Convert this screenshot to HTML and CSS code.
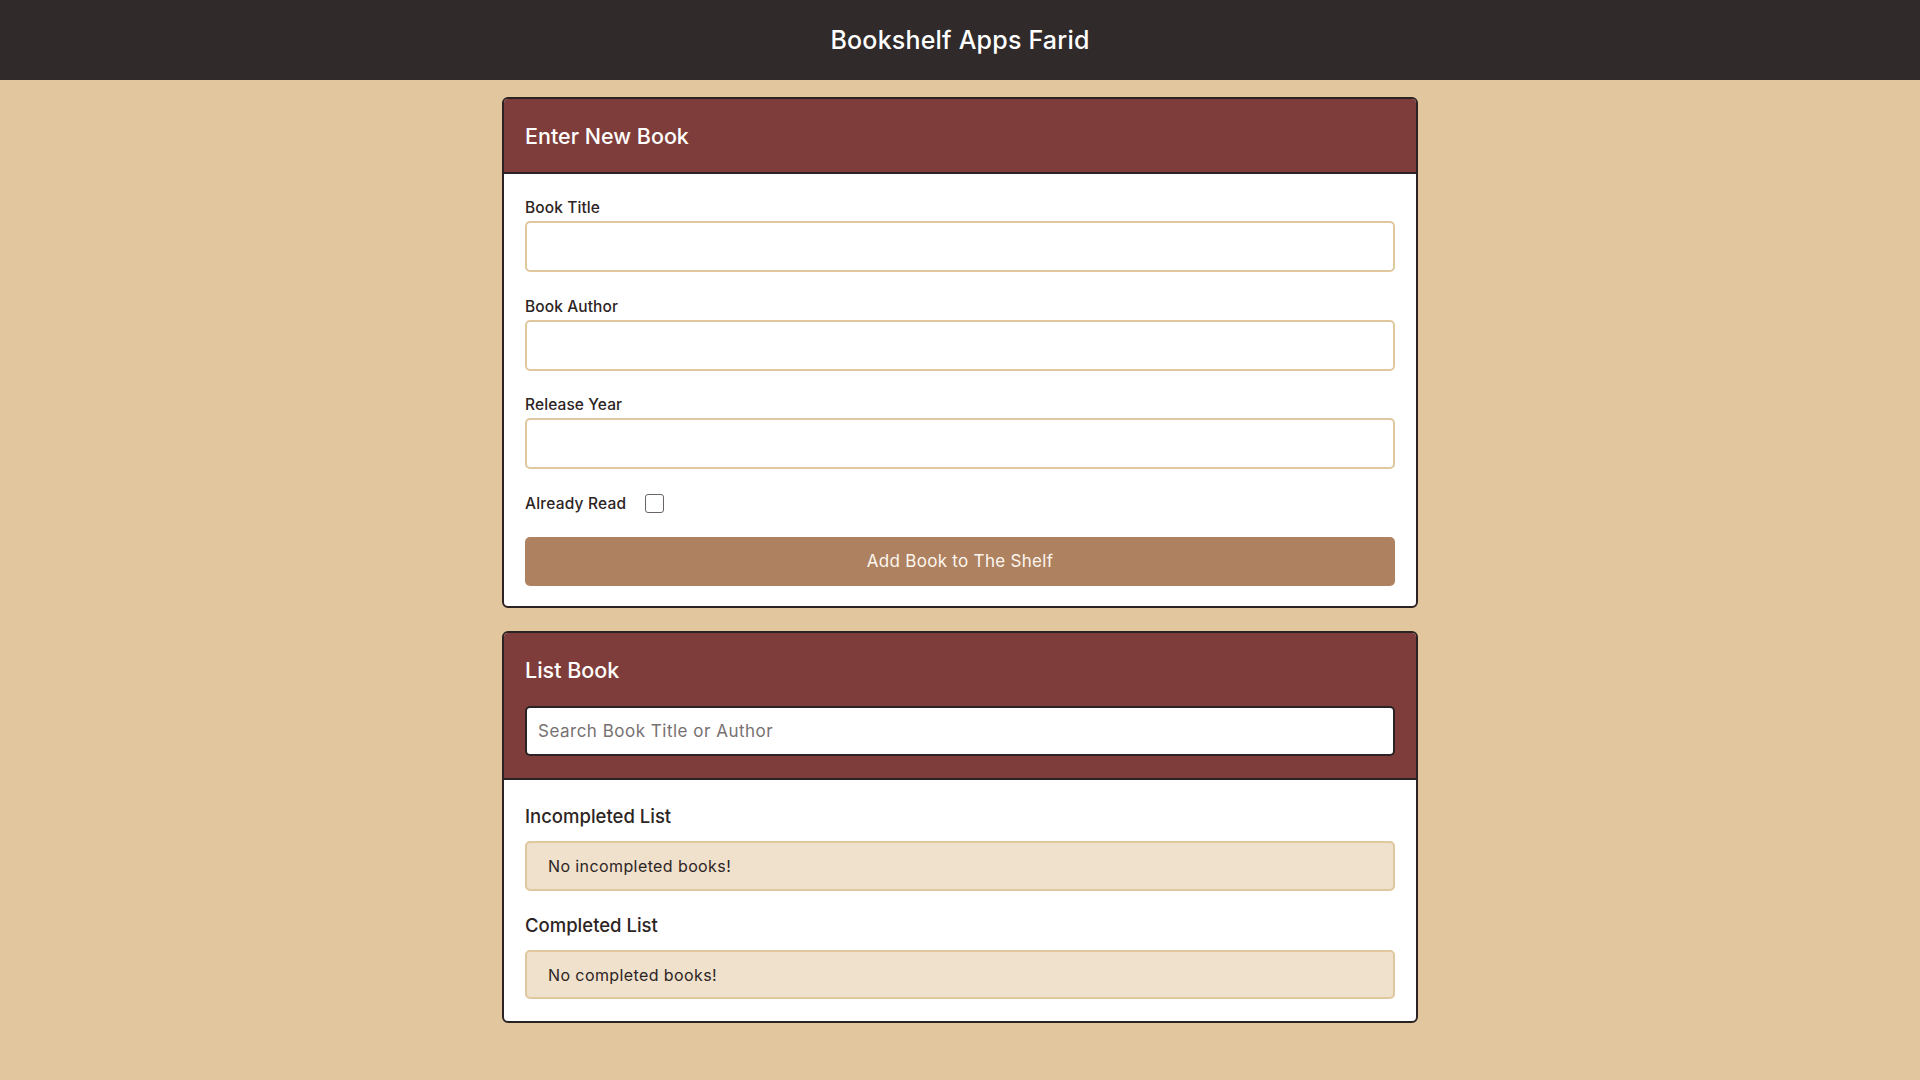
FILE: index.html
```html
<!DOCTYPE html>
<html lang="en">
<head>
<meta charset="UTF-8">
<title>Bookshelf Apps Farid</title>
<link rel="stylesheet" href="styles.css">
</head>
<body>
<header class="app-bar">
  <h1 class="app-title">Bookshelf Apps Farid</h1>
</header>
<main class="main">
  <section class="card">
    <div class="card-head">
      <h2 class="card-title">Enter New Book</h2>
    </div>
    <form class="card-body form">
      <div class="field">
        <label class="label" for="title">Book Title</label>
        <input class="input" id="title" type="text">
      </div>
      <div class="field">
        <label class="label" for="author">Book Author</label>
        <input class="input" id="author" type="text">
      </div>
      <div class="field">
        <label class="label" for="year">Release Year</label>
        <input class="input" id="year" type="number">
      </div>
      <div class="check-row">
        <label class="label" for="read">Already Read</label>
        <span class="checkbox"></span>
      </div>
      <button class="btn" type="button">Add Book to The Shelf</button>
    </form>
  </section>

  <section class="card">
    <div class="card-head search-head">
      <h2 class="card-title">List Book</h2>
      <input class="search" type="text" placeholder="Search Book Title or Author">
    </div>
    <div class="card-body lists">
      <h3 class="list-title">Incompleted List</h3>
      <div class="empty first">No incompleted books!</div>
      <h3 class="list-title second">Completed List</h3>
      <div class="empty">No completed books!</div>
    </div>
  </section>
</main>
</body>
</html>
```
FILE: styles.css
```css
* { box-sizing: border-box; }

body {
  margin: 0;
  background: #e2c69e;
  font-family: Inter, "Open Sans", sans-serif;
  color: #2d2424;
  min-height: 1080px;
}

.app-bar {
  height: 80px;
  background: #302a2a;
  display: flex;
  align-items: center;
  justify-content: center;
}

.app-title {
  margin: 0;
  color: #ffffff;
  font-size: 25px;
  font-weight: 500;
  letter-spacing: 0.2px;
  line-height: 1;
}

.main {
  width: 916px;
  margin: 17px auto 0;
  display: flex;
  flex-direction: column;
  gap: 23px;
}

.card {
  background: #ffffff;
  border: 2px solid #2b2323;
  border-radius: 6px;
  overflow: hidden;
}

.card-head {
  background: #7e3d3a;
  padding: 21px;
  border-bottom: 2px solid #2b2323;
}

.search-head {
  padding-bottom: 22px;
}

.card-title {
  margin: 0;
  color: #ffffff;
  font-size: 21.5px;
  font-weight: 500;
  line-height: 31px;
  padding-top: 1px;
  margin-bottom: -1px;
}

.card-body {
  padding: 21px 21px 20px;
}

.form {
  display: flex;
  flex-direction: column;
}

.field {
  display: flex;
  flex-direction: column;
  gap: 1px;
  margin-bottom: 21.5px;
}

.label {
  font-size: 15.5px;
  font-weight: 500;
  letter-spacing: 0.1px;
  line-height: 24px;
  padding-top: 1px;
  color: #2d2424;
}

.input {
  height: 51px;
  border: 2px solid #dfc89e;
  border-radius: 5px;
  background: #ffffff;
  font-family: inherit;
  font-size: 16px;
  padding: 0 10px;
}

.check-row {
  display: flex;
  align-items: center;
  gap: 19px;
  height: 25px;
  margin-bottom: 21px;
}

.check-row .label {
  letter-spacing: 0.2px;
}

.checkbox {
  width: 19px;
  height: 19px;
  border: 1.5px solid #6b6464;
  border-radius: 3px;
  background: #fff;
}

.btn {
  height: 49px;
  border: none;
  border-radius: 5px;
  background: #ae8160;
  color: #fdf6ef;
  font-family: inherit;
  font-size: 17px;
  letter-spacing: 0.3px;
  font-weight: 400;
}

.search {
  display: block;
  width: 100%;
  height: 50px;
  margin-top: 21px;
  border: 2px solid #2b2323;
  border-radius: 5px;
  background: #ffffff;
  font-family: inherit;
  font-size: 17px;
  letter-spacing: 0.5px;
  padding: 0 11px;
  color: #2d2424;
}

.search::placeholder {
  color: #777171;
}

.lists {
  padding-top: 23px;
  padding-bottom: 22px;
}

.list-title {
  margin: 0 0 11px;
  font-size: 18.5px;
  font-weight: 500;
  letter-spacing: 0;
  line-height: 27px;
  color: #2d2424;
}

.list-title.second {
  margin-top: 21.5px;
}

.empty {
  height: 49px;
  display: flex;
  align-items: center;
  padding: 0 21px;
  background: #efe1cc;
  border: 2px solid #e0c89e;
  border-radius: 5px;
  font-size: 16px;
  letter-spacing: 0.4px;
  color: #2d2424;
}

.empty.first {
  height: 50px;
}
```
